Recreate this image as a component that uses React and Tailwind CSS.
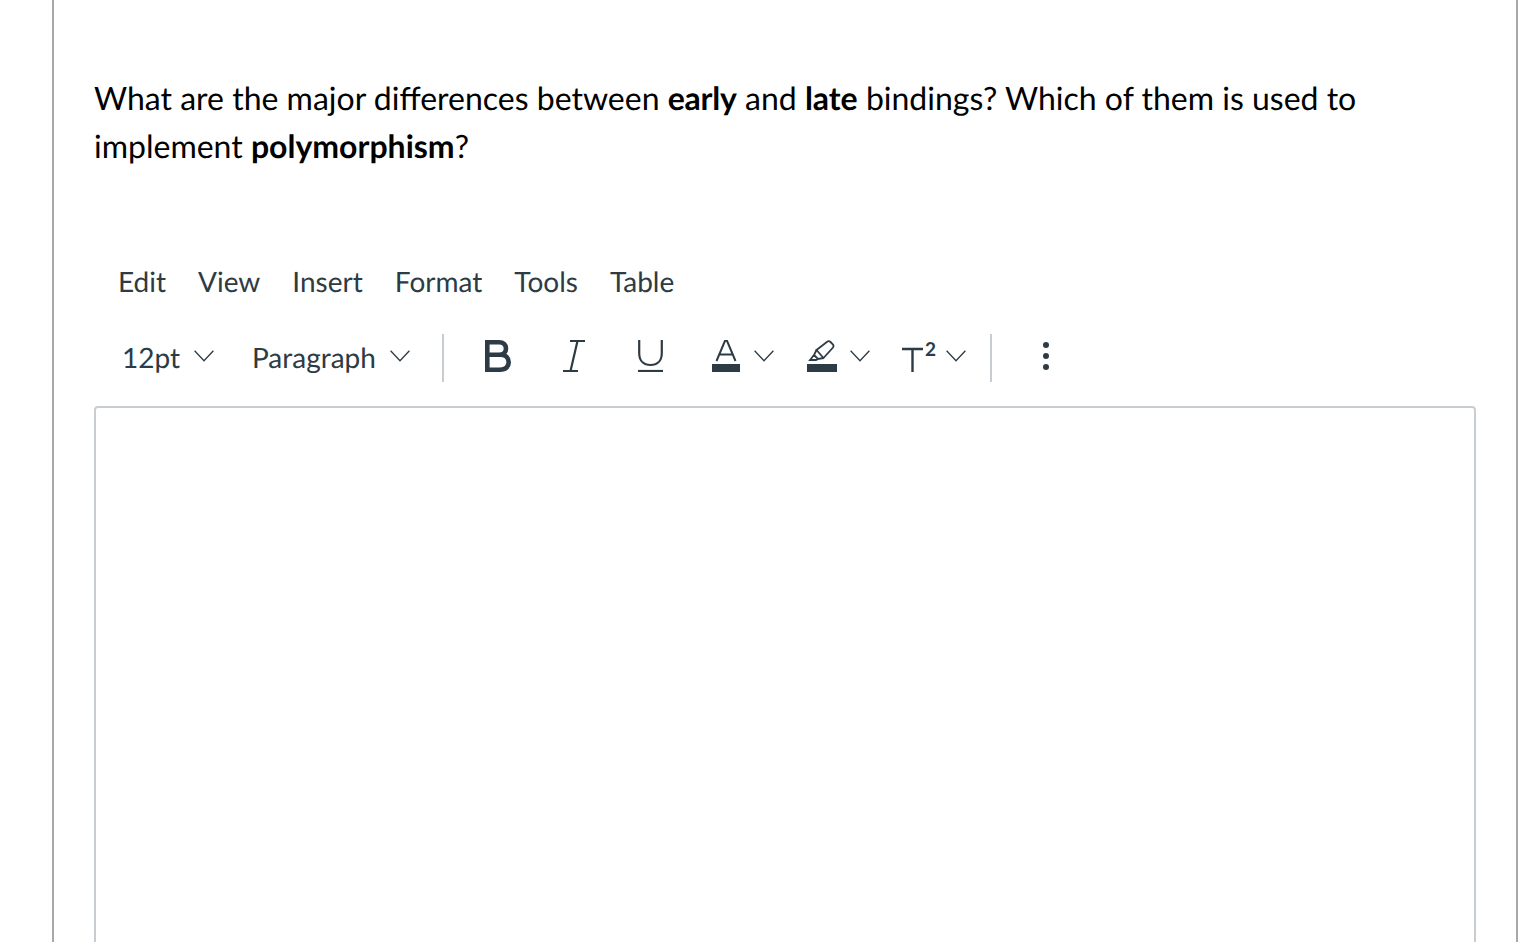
const Chevron = ({ className }) => (
  <svg className={className} width="20" height="12" viewBox="0 0 20 12" fill="none" stroke="#2d3b45" strokeWidth="1.3">
    <path d="M0.6 0.8 L10 10.8 L19.4 0.8" />
  </svg>
);

export default function App() {
  return (
    <div className="h-[942px] overflow-hidden bg-white font-['Lato','Noto_Sans',sans-serif] [text-rendering:geometricPrecision] pl-[52px] pr-[6px]">
      <div className="h-[942px] border-x-2 border-[#a8a8a8] px-[40px]">
        <p className="pt-[74px] text-[32px] leading-[48px] text-black">
          What are the major differences between <strong className="tracking-[-0.2px]">early</strong> and <strong>late</strong> bindings? Which of them is used to
          <br />
          implement <strong>polymorphism</strong>?
        </p>

        <div className="mt-[87px] flex h-[48px] items-center pl-[24px] text-[28px] text-[#2d3b45]">
          <span>Edit</span>
          <span className="ml-[32px]">View</span>
          <span className="ml-[32px]">Insert</span>
          <span className="ml-[32px]">Format</span>
          <span className="ml-[32px]">Tools</span>
          <span className="ml-[32px]">Table</span>
        </div>

        <div className="mt-[29px] flex h-[48px] items-center text-[28px] text-[#2d3b45]">
          <span className="mb-[2px] ml-[28px] w-[58px]">12pt</span>
          <Chevron className="mb-[4px] ml-[14px]" />
          <span className="mb-[2px] ml-[38px] w-[124px]">Paragraph</span>
          <Chevron className="mb-[4px] ml-[14px]" />
          <div className="ml-[32px] h-[48px] w-[2px] bg-[#c7cdd1]" />

          <svg className="mb-[4px] ml-[41px]" width="26" height="32" viewBox="0 0 26 32" fill="none" stroke="#2d3b45" strokeWidth="4.6">
            <path d="M2.3 14.8 H14 C19 14.8 21 11.5 21 8.4 C21 4.7 18.5 2.3 14 2.3 H2.3 V29.7 H15 C21 29.7 23.7 26.5 23.7 22.3 C23.7 18 21 14.8 15 14.8" />
          </svg>
          <svg className="mb-[4px] ml-[52px]" width="22" height="32" viewBox="0 0 22 32" fill="none" stroke="#2d3b45" strokeWidth="2.2">
            <path d="M7 1 H22 M0 31 H15 M14.5 1 L7.5 31" />
          </svg>
          <svg className="mb-[4px] ml-[53px]" width="25" height="32" viewBox="0 0 25 32" fill="none" stroke="#2d3b45" strokeWidth="2.2">
            <path d="M1.2 0 V13 C1.2 21 6 25 12.5 25 C19 25 23.8 21 23.8 13 V0" />
            <path d="M0 31 H25" />
          </svg>
          <svg className="mb-[4px] ml-[49px]" width="28" height="32" viewBox="0 0 28 32" fill="none" stroke="#2d3b45" strokeWidth="2">
            <path d="M4.5 21 L13 0.8 H15 L23.5 21 M7.5 14.5 H20.5" />
            <rect x="0" y="24" width="28" height="8" fill="#2d3b45" stroke="none" />
          </svg>
          <Chevron className="mb-[4px] ml-[14px]" />
          <svg className="mb-[4px] ml-[33px]" width="30" height="32" viewBox="0 0 30 32" fill="none" stroke="#2d3b45" strokeWidth="1.8">
            <path d="M9.5 10 L20.5 1.5 Q22 0.5 23.5 2 L26 4.5 Q27 6 26 7.5 L16.5 18 Z" />
            <path d="M9.5 10 L7 15 L11 19 L16.5 18 M7 15 L3 20 H9 L11 19" />
            <rect x="0" y="24" width="30" height="8" fill="#2d3b45" stroke="none" />
          </svg>
          <Chevron className="mb-[4px] ml-[13px]" />
          <svg className="mb-[4px] ml-[32px]" width="21" height="32" viewBox="0 0 21 32" fill="none" stroke="#2d3b45" strokeWidth="2.4">
            <path d="M0 9 H21 M10.5 9 V32" />
          </svg>
          <span className="mb-[16px] ml-[2px] w-[10px] text-[19px] leading-[20px] font-bold">2</span>
          <Chevron className="mb-[4px] ml-[11px]" />
          <div className="ml-[24px] h-[48px] w-[2px] bg-[#c7cdd1]" />
          <svg className="mb-[4px] ml-[51px]" width="6" height="32" viewBox="0 0 6 32" fill="#2d3b45">
            <circle cx="3" cy="5" r="3" />
            <circle cx="3" cy="16" r="3" />
            <circle cx="3" cy="27" r="3" />
          </svg>
        </div>

        <div className="mt-[24px] h-[600px] rounded-[4px] border-2 border-[#c7cdd1]" />
      </div>
    </div>
  );
}
